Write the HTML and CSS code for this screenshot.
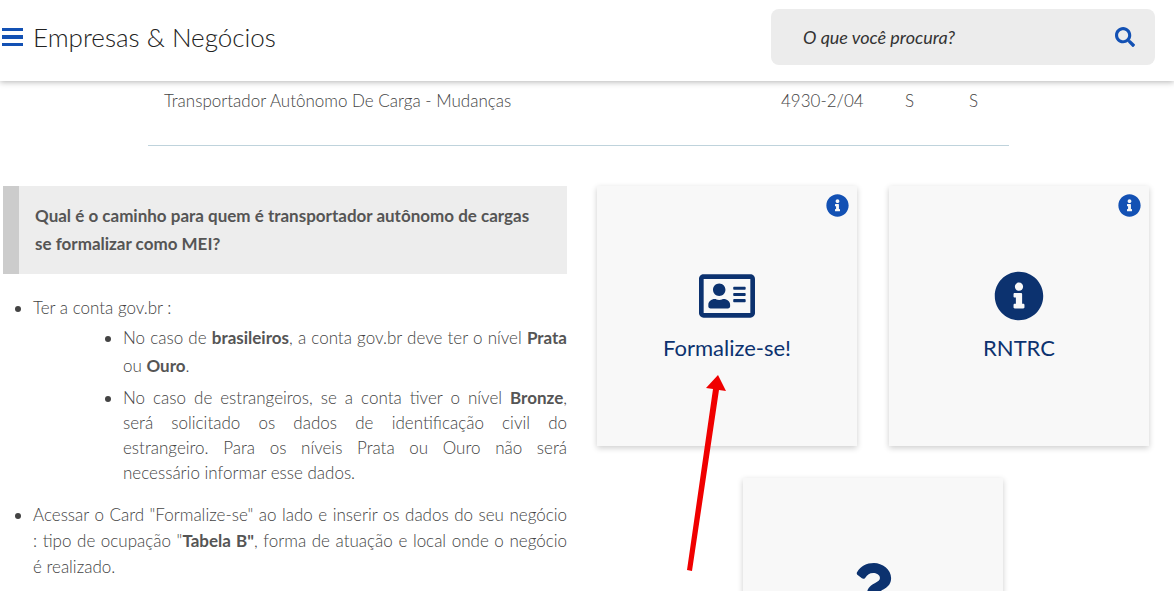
FILE: index.html
```
<!DOCTYPE html>
<html lang="pt-BR">
<head>
    <meta charset="UTF-8">
    <meta name="viewport" content="width=device-width, initial-scale=1.0">
    <title>Empresas &amp; Negócios</title>
    <link rel="stylesheet" href="styles.css">
</head>
<body>
    <svg class="sprite" aria-hidden="true">
        <symbol id="info" viewBox="0 0 512 512">
            <path d="M256 8C119.043 8 8 119.083 8 256c0 136.997 111.043 248 248 248s248-111.003 248-248C504 119.083 392.957 8 256 8zm0 110c23.196 0 42 18.804 42 42s-18.804 42-42 42-42-18.804-42-42 18.804-42 42-42zm56 254c0 6.627-5.373 12-12 12h-88c-6.627 0-12-5.373-12-12v-24c0-6.627 5.373-12 12-12h12v-64h-12c-6.627 0-12-5.373-12-12v-24c0-6.627 5.373-12 12-12h64c6.627 0 12 5.373 12 12v100h12c6.627 0 12 5.373 12 12v24z"/>
        </symbol>
    </svg>

    <header class="header">
        <button class="menu" type="button" aria-label="Menu">
            <svg viewBox="0 0 21 18" width="21" height="18"><path d="M0 0h21v3H0zM0 7h21v4H0zM0 15h21v3H0z"/></svg>
        </button>
        <h1>Empresas &amp; Negócios</h1>
        <form class="search">
            <input type="text" aria-label="Buscar" placeholder="O que você procura?">
            <button type="button" aria-label="Pesquisar">
                <svg viewBox="0 0 512 512" width="20" height="20"><path d="M505 442.7L405.3 343c-4.500-4.500-10.600-7-17-7H372c27.600-35.300 44-79.700 44-128C416 93.100 322.900 0 208 0S0 93.100 0 208s93.100 208 208 208c48.300 0 92.700-16.400 128-44v16.300c0 6.400 2.500 12.500 7 17l99.700 99.700c9.400 9.400 24.600 9.400 33.900 0l28.300-28.300c9.400-9.400 9.400-24.600.1-34zM208 336c-70.700 0-128-57.200-128-128 0-70.700 57.200-128 128-128 70.700 0 128 57.200 128 128 0 70.700-57.200 128-128 128z"/></svg>
            </button>
        </form>
    </header>

    <main>
        <table class="ocupacoes">
            <tbody>
                <tr>
                    <td>Transportador Autônomo De Carga - Mudanças</td>
                    <td class="codigo">4930-2/04</td>
                    <td class="iss">S</td>
                    <td class="icms">S</td>
                </tr>
            </tbody>
        </table>

        <div class="content">
            <section class="texto">
                <blockquote>Qual é o caminho para quem é transportador autônomo de cargas se&nbsp;formalizar como MEI?</blockquote>
                <ul class="passos">
                    <li>Ter a conta gov.br :
                        <ul>
                            <li>No caso de <strong>brasileiros</strong>, a conta gov.br deve ter o nível <strong>Prata</strong> ou <strong>Ouro</strong>.</li>
                            <li class="estrangeiros">No caso de estrangeiros, se a conta tiver o nível <strong>Bronze</strong>, será solicitado os dados de identificação civil do estrangeiro.&nbsp;Para os níveis Prata ou Ouro não será necessário&nbsp;informar esse dados.</li>
                        </ul>
                    </li>
                    <li class="acessar">Acessar o Card "Formalize-se" ao lado e inserir os dados do seu negócio :&nbsp;tipo de ocupação "<strong>Tabela B"</strong>, forma de atuação e local onde o negócio é&nbsp;realizado.</li>
                </ul>
            </section>

            <section class="cards">
                <div class="card">
                    <a href="#">
                        <svg viewBox="0 0 576 512" width="56" height="50"><path d="M528 32H48C21.500 32 0 53.500 0 80v352c0 26.500 21.500 48 48 48h480c26.500 0 48-21.500 48-48V80c0-26.500-21.500-48-48-48zm0 400H48V80h480v352zM208 256c35.300 0 64-28.700 64-64s-28.700-64-64-64-64 28.700-64 64 28.700 64 64 64zm-89.600 128h179.200c12.400 0 22.400-8.600 22.400-19.200v-19.200c0-31.800-30.100-57.600-67.200-57.600-10.800 0-18.700 8-44.800 8-26.900 0-33.400-8-44.800-8-37.100 0-67.200 25.800-67.200 57.600v19.200c0 10.600 10 19.200 22.400 19.200zM360 320h112c4.400 0 8-3.600 8-8v-16c0-4.400-3.600-8-8-8H360c-4.400 0-8 3.600-8 8v16c0 4.400 3.600 8 8 8zm0-64h112c4.400 0 8-3.600 8-8v-16c0-4.400-3.600-8-8-8H360c-4.400 0-8 3.600-8 8v16c0 4.400 3.600 8 8 8zm0-64h112c4.400 0 8-3.600 8-8v-16c0-4.400-3.600-8-8-8H360c-4.400 0-8 3.600-8 8v16c0 4.400 3.600 8 8 8z"/></svg>
                        <span>Formalize-se!</span>
                    </a>
                    <button class="info" type="button" aria-label="Informações"><svg width="23" height="23"><use href="#info"/></svg></button>
                    <svg class="seta" viewBox="0 0 42 198" width="42" height="198"><path d="M32 1l8 16-7-1L6 197l-5-1L27 15l-7-1z"/></svg>
                </div>
                <div class="card">
                    <a href="#">
                        <svg width="50" height="50"><use href="#info"/></svg>
                        <span>RNTRC</span>
                    </a>
                    <button class="info" type="button" aria-label="Informações"><svg width="23" height="23"><use href="#info"/></svg></button>
                </div>
                <div class="card">
                    <a href="#" aria-label="Dúvidas">
                        <svg viewBox="0 0 384 512" width="38" height="50"><path d="M202.021 0C122.202 0 70.503 32.703 29.914 91.026c-7.363 10.580-5.093 25.086 5.178 32.874l43.138 32.709c10.373 7.865 25.132 6.026 33.253-4.148 25.049-31.381 43.630-49.449 82.757-49.449 30.764 0 68.816 19.799 68.816 49.631 0 22.552-18.617 34.134-48.993 51.164-35.423 19.860-82.299 44.576-82.299 106.405V320c0 13.255 10.745 24 24 24h72.471c13.255 0 24-10.745 24-24v-5.773c0-42.860 125.268-44.645 125.268-160.627C377.504 66.256 286.902 0 202.021 0zM192 373.459c-38.196 0-69.271 31.075-69.271 69.271 0 38.195 31.075 69.270 69.271 69.270s69.271-31.075 69.271-69.270-31.075-69.271-69.271-69.271z"/></svg>
                    </a>
                </div>
            </section>
        </div>
    </main>
</body>
</html>
```
FILE: styles.css
```
* {
    box-sizing: border-box;
}

body {
    font-family: Lato, "Open Sans", sans-serif;
    font-size: 17px;
    font-weight: 300;
    color: #444;
    background-color: #fff;
    margin: 0;
}

button {
    background: none;
    border: none;
    padding: 0;
    cursor: pointer;
}

button svg {
    display: block;
}

strong {
    font-weight: 700;
    color: #555;
}

.sprite {
    display: none;
}

/* Header */
.header {
    position: sticky;
    top: 0;
    z-index: 10;
    display: flex;
    align-items: center;
    gap: 10px;
    padding: 9px 19px 16px 2px;
    background-color: #fff;
    box-shadow: 0 1px 6px rgba(0, 0, 0, 0.3);
}

.menu {
    fill: #1351b4;
}

.header h1 {
    margin: 0;
    font-size: 26px;
    font-weight: 300;
    color: #222;
}

.search {
    display: flex;
    align-items: center;
    width: 384px;
    height: 56px;
    margin-left: auto;
    padding: 0 20px 0 32px;
    border-radius: 8px;
    background-color: #ececec;
    fill: #1351b4;
}

.search input {
    flex: 1;
    min-width: 0;
    padding: 0;
    border: none;
    outline: none;
    background: none;
    font: italic 400 18px Lato, "Open Sans", sans-serif;
    color: #333;
}

.search input::placeholder {
    color: #333;
    opacity: 1;
}

/* Tabela */
.ocupacoes {
    width: calc(100% - 313px);
    margin-left: 148px;
    border-collapse: collapse;
    border-bottom: 1px solid #bfd3dc;
}

.ocupacoes td {
    height: 64px;
    padding: 8px 16px;
    line-height: 24px;
    vertical-align: top;
}

.ocupacoes .codigo {
    width: 124px;
}

.ocupacoes .iss {
    width: 64px;
}

.ocupacoes .icms {
    width: 56px;
}

.content {
    display: grid;
    grid-template-columns: 1fr 552px;
    gap: 30px;
    padding: 40px 25px 32px 3px;
}

.texto {
    text-align: justify;
}

blockquote {
    margin: 0;
    padding: 16px;
    border-left: 16px solid #ccc;
    background-color: #ededed;
    color: #555;
    font-weight: 700;
    line-height: 28px;
    text-align: left;
}

.passos {
    margin: 20px 0 0;
    padding-left: 30px;
    line-height: 28px;
}

.passos ul {
    margin: 2px 0 0;
    padding-left: 90px;
    list-style: disc;
}

.passos .estrangeiros {
    margin-top: 5px;
    line-height: 25px;
}

.passos .acessar {
    margin-top: 17px;
    line-height: 26px;
}

/* Cards */
.cards {
    display: flex;
    flex-wrap: wrap;
    justify-content: center;
    align-content: flex-start;
    gap: 32px;
}

.card {
    position: relative;
    width: 260px;
    height: 260px;
    background-color: #f8f8f8;
    box-shadow: 0 2px 6px rgba(0, 0, 0, 0.2);
}

.card a {
    display: flex;
    flex-direction: column;
    align-items: center;
    gap: 12px;
    height: 100%;
    padding-top: 85px;
    color: #0c326f;
    fill: #0c326f;
    font-size: 22px;
    font-weight: 400;
    line-height: 30px;
    text-decoration: none;
}

.info {
    position: absolute;
    top: 8px;
    right: 8px;
    fill: #1351b4;
}

.seta {
    position: absolute;
    top: 188px;
    left: 89px;
    z-index: 2;
    fill: #f00000;
    pointer-events: none;
}
```
